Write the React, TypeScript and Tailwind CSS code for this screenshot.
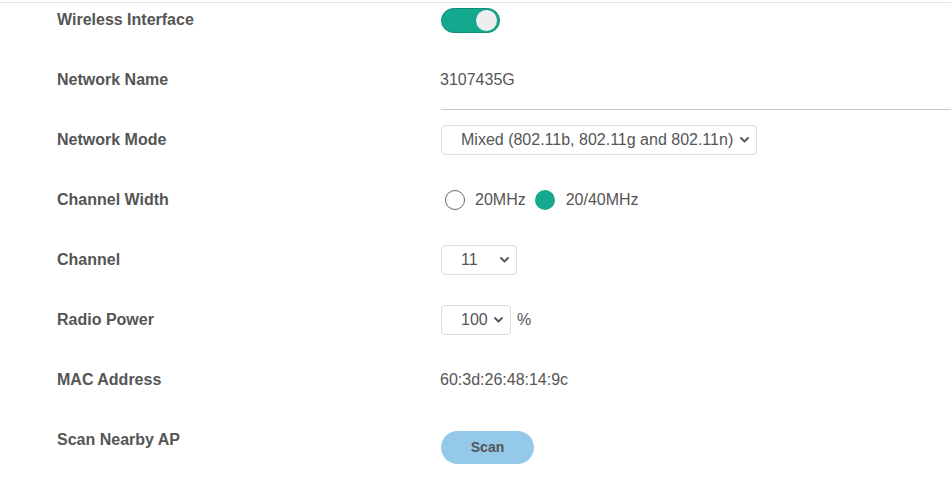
import { useState } from "react";

const Chevron = () => (
  <svg width="9" height="6" viewBox="0 0 9 6" className="pointer-events-none absolute right-[8px] top-1/2 -translate-y-1/2" fill="none" stroke="#555" strokeWidth="1.8" strokeLinecap="round" strokeLinejoin="round">
    <polyline points="1 1 4.5 4.5 8 1" />
  </svg>
);

function Select({ value, options, width }: { value: string; options: string[]; width: string }) {
  return (
    <div className={`relative h-[30px] ${width}`}>
      <select
        defaultValue={value}
        className="h-full w-full appearance-none rounded-[4px] border border-[#dcdcdc] bg-white pl-[19px] pr-[14px] text-[16px] text-[#555] outline-none"
      >
        {options.map((o) => (
          <option key={o}>{o}</option>
        ))}
      </select>
      <Chevron />
    </div>
  );
}

function Row({ label, children }: { label: string; children: React.ReactNode }) {
  return (
    <div className="flex h-[32px] items-center">
      <div className="w-[441px] shrink-0 pl-[57px] text-[16px] font-bold text-[#555]">{label}</div>
      <div className="flex flex-1 items-center">{children}</div>
    </div>
  );
}

export default function App() {
  const [on, setOn] = useState(true);
  const [width, setWidth] = useState("40");

  return (
    <div className="min-h-[482px] bg-white pt-[2px] font-['Liberation_Sans',Arial,sans-serif] text-[#555]">
      <div className="h-px w-full bg-[#e3e3e3]" />
      <div className="flex flex-col gap-[28px] pt-[1px]">
        <Row label="Wireless Interface">
          <button
            onClick={() => setOn(!on)}
            className={`flex h-[25px] w-[59px] items-center rounded-full border border-[#0f8c76] px-[2px] ${on ? "justify-end bg-[#14a88e]" : "justify-start bg-[#ccc]"}`}
          >
            <span className="h-[21px] w-[21px] rounded-full bg-[#eeeeee]" />
          </button>
        </Row>

        <Row label="Network Name">
          <div className="relative w-full">
            <span className="-ml-px text-[16px] text-[#555]">3107435G</span>
            <div className="absolute left-0 right-0 top-[41px] h-px bg-[#c8c8c8]" />
          </div>
        </Row>

        <Row label="Network Mode">
          <Select value="Mixed (802.11b, 802.11g and 802.11n)" options={["Mixed (802.11b, 802.11g and 802.11n)", "802.11b", "802.11g", "802.11n"]} width="w-[316px]" />
        </Row>

        <Row label="Channel Width">
          <div className="flex items-center text-[16px] text-[#555]">
            <button onClick={() => setWidth("20")} className="ml-[4px] flex items-center">
              {width === "20" ? (
                <span className="h-[20px] w-[20px] rounded-full bg-[#14a88e]" />
              ) : (
                <span className="h-[20px] w-[20px] rounded-full border-[1.5px] border-[#666]" />
              )}
              <span className="ml-[10px]">20MHz</span>
            </button>
            <button onClick={() => setWidth("40")} className="ml-[9px] flex items-center">
              {width === "40" ? (
                <span className="h-[20px] w-[20px] rounded-full bg-[#14a88e]" />
              ) : (
                <span className="h-[20px] w-[20px] rounded-full border-[1.5px] border-[#666]" />
              )}
              <span className="ml-[11px]">20/40MHz</span>
            </button>
          </div>
        </Row>

        <Row label="Channel">
          <Select value="11" options={["Auto", "1", "2", "3", "4", "5", "6", "7", "8", "9", "10", "11", "12", "13"]} width="w-[76px]" />
        </Row>

        <Row label="Radio Power">
          <Select value="100" options={["100", "75", "50", "25"]} width="w-[70px]" />
          <span className="ml-[6px] text-[16px] text-[#555]">%</span>
        </Row>

        <Row label="MAC Address">
          <span className="-ml-px text-[16px] text-[#555]">60:3d:26:48:14:9c</span>
        </Row>

        <Row label="Scan Nearby AP">
          <button className="mt-[15px] h-[33px] w-[93px] rounded-full bg-[#94c9ea] text-[14px] font-bold text-[#555]">
            Scan
          </button>
        </Row>
      </div>
    </div>
  );
}
